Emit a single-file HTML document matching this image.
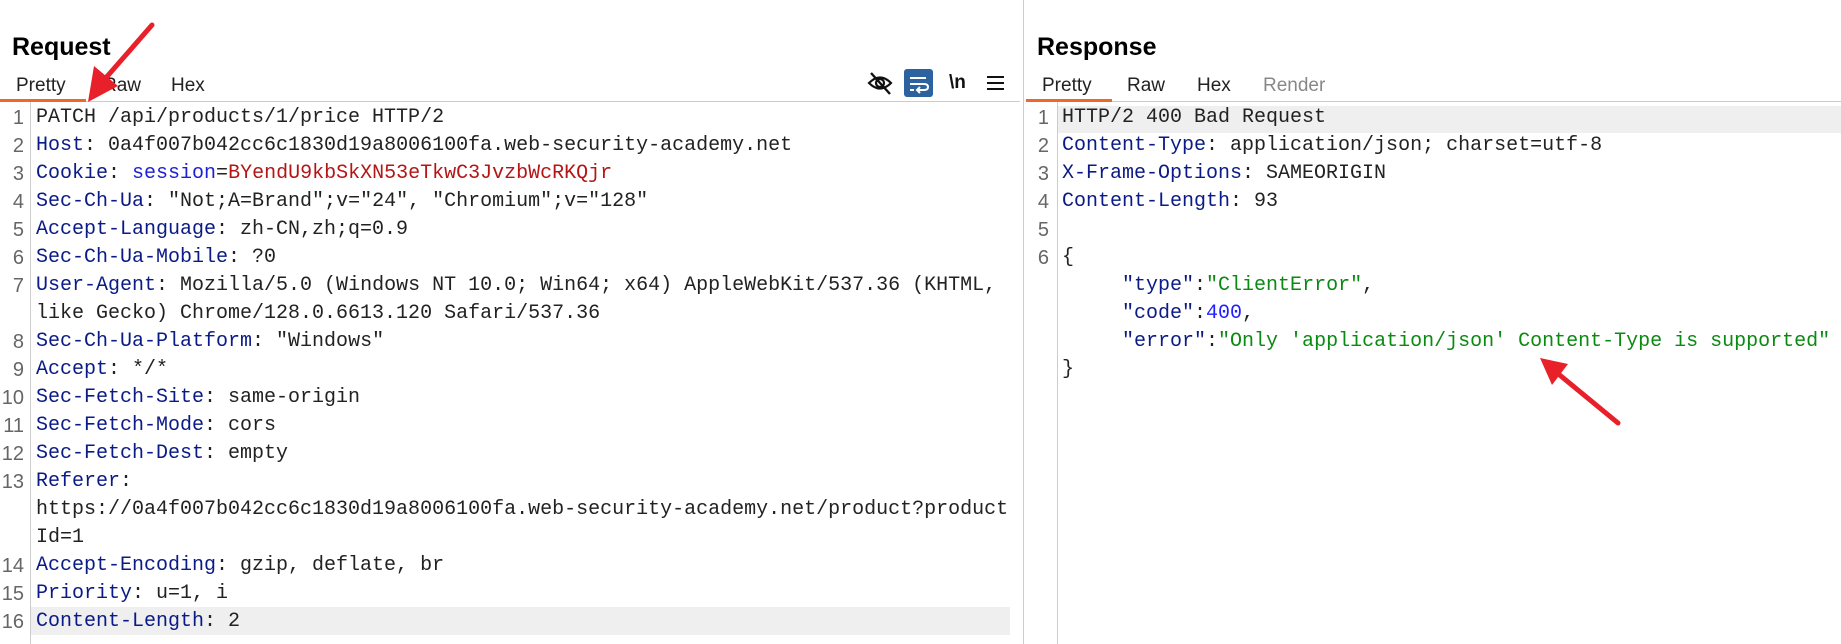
<!DOCTYPE html>
<html><head><meta charset="utf-8"><style>
*{margin:0;padding:0;box-sizing:border-box}
body{width:1841px;height:644px;background:#fff;position:relative;overflow:hidden;font-family:"Liberation Sans",sans-serif}
.h{position:absolute;top:33px;font-size:25px;font-weight:bold;color:#000}
.tab{position:absolute;top:75px;font-size:19px;color:#222}
.code{position:absolute;font-family:"Liberation Mono",monospace;font-size:20px;line-height:28px;white-space:pre;color:#222}
.ln{position:absolute;font-family:"Liberation Sans",sans-serif;font-size:20px;line-height:28px;color:#666;text-align:right}
.k{color:#0a1a86}.s{color:#1f1fd6}.v{color:#b41515}.g{color:#0b8a12}.n{color:#1f1fff}
</style></head><body>
<div style="position:absolute;left:1023px;top:0;width:1px;height:644px;background:#ccc"></div>
<div class="h" style="left:12px">Request</div>
<div class="h" style="left:1037px">Response</div>
<div class="tab" style="left:16px">Pretty</div>
<div class="tab" style="left:103px">Raw</div>
<div class="tab" style="left:171px">Hex</div>
<div class="tab" style="left:1042px">Pretty</div>
<div class="tab" style="left:1127px">Raw</div>
<div class="tab" style="left:1197px">Hex</div>
<div class="tab" style="left:1263px;color:#888">Render</div>
<div style="position:absolute;left:0;top:101px;width:1020px;height:1px;background:#ccc"></div>
<div style="position:absolute;left:1026px;top:101px;width:815px;height:1px;background:#ccc"></div>
<div style="position:absolute;left:0;top:99px;width:86px;height:3px;background:#f0672a"></div>
<div style="position:absolute;left:1026px;top:99px;width:86px;height:3px;background:#f0672a"></div>
<svg style="position:absolute;left:866px;top:70px" width="28" height="26" viewBox="0 0 28 26"><path d="M3 13 Q14 2 25 13 Q14 24 3 13Z" fill="none" stroke="#111" stroke-width="2.2"/><circle cx="14" cy="13" r="4" fill="none" stroke="#111" stroke-width="2.2"/><line x1="5" y1="3" x2="24" y2="24" stroke="#111" stroke-width="2.4"/></svg>
<svg style="position:absolute;left:904px;top:69px" width="29" height="28" viewBox="0 0 29 28"><rect width="29" height="28" rx="3" fill="#2c62a0"/><path d="M6 9H22M6 15H20Q24 15 24 18Q24 21 20 21H14M16 18L13 21L16 24M6 21H10" fill="none" stroke="#fff" stroke-width="2"/></svg>
<div style="position:absolute;left:949px;top:72px;font-size:19px;color:#111;font-weight:bold">\n</div>
<svg style="position:absolute;left:987px;top:75px" width="17" height="16"><path d="M0 2H17M0 8H17M0 14H17" stroke="#111" stroke-width="2"/></svg>
<div style="position:absolute;left:30px;top:102px;width:1px;height:542px;background:#ccc"></div>
<div style="position:absolute;left:1057px;top:102px;width:1px;height:542px;background:#ccc"></div>
<div style="position:absolute;left:31px;top:607px;width:979px;height:28px;background:#efefef"></div>
<div style="position:absolute;left:1058px;top:106px;width:783px;height:27px;background:#efefef"></div>
<div class="ln" style="left:0;top:104px;width:24px">1<br>2<br>3<br>4<br>5<br>6<br>7<br><br>8<br>9<br>10<br>11<br>12<br>13<br><br><br>14<br>15<br>16</div>
<div class="code" style="left:36px;top:104px">PATCH /api/products/1/price HTTP/2
<span class="k">Host</span>: 0a4f007b042cc6c1830d19a8006100fa.web-security-academy.net
<span class="k">Cookie</span>: <span class="s">session</span>=<span class="v">BYendU9kbSkXN53eTkwC3JvzbWcRKQjr</span>
<span class="k">Sec-Ch-Ua</span>: "Not;A=Brand";v="24", "Chromium";v="128"
<span class="k">Accept-Language</span>: zh-CN,zh;q=0.9
<span class="k">Sec-Ch-Ua-Mobile</span>: ?0
<span class="k">User-Agent</span>: Mozilla/5.0 (Windows NT 10.0; Win64; x64) AppleWebKit/537.36 (KHTML,
like Gecko) Chrome/128.0.6613.120 Safari/537.36
<span class="k">Sec-Ch-Ua-Platform</span>: "Windows"
<span class="k">Accept</span>: */*
<span class="k">Sec-Fetch-Site</span>: same-origin
<span class="k">Sec-Fetch-Mode</span>: cors
<span class="k">Sec-Fetch-Dest</span>: empty
<span class="k">Referer</span>:
https://0a4f007b042cc6c1830d19a8006100fa.web-security-academy.net/product?product
Id=1
<span class="k">Accept-Encoding</span>: gzip, deflate, br
<span class="k">Priority</span>: u=1, i
<span class="k">Content-Length</span>: 2</div>
<div class="ln" style="left:1027px;top:104px;width:22px">1<br>2<br>3<br>4<br>5<br>6</div>
<div class="code" style="left:1062px;top:104px">HTTP/2 400 Bad Request
<span class="k">Content-Type</span>: application/json; charset=utf-8
<span class="k">X-Frame-Options</span>: SAMEORIGIN
<span class="k">Content-Length</span>: 93

{
     <span class="k">"type"</span>:<span class="g">"ClientError"</span>,
     <span class="k">"code"</span>:<span class="n">400</span>,
     <span class="k">"error"</span>:<span class="g">"Only 'application/json' Content-Type is supported"</span>
}</div>
<svg style="position:absolute;left:0;top:0" width="1841" height="644">
<line x1="152" y1="25" x2="104" y2="80" stroke="#e8202a" stroke-width="5" stroke-linecap="round"/>
<polygon points="88,102 94,66 118,86" fill="#e8202a"/>
<line x1="1618" y1="423" x2="1556" y2="372" stroke="#e8202a" stroke-width="5" stroke-linecap="round"/>
<polygon points="1540,358 1568,364 1552,385" fill="#e8202a"/>
</svg>
</body></html>
